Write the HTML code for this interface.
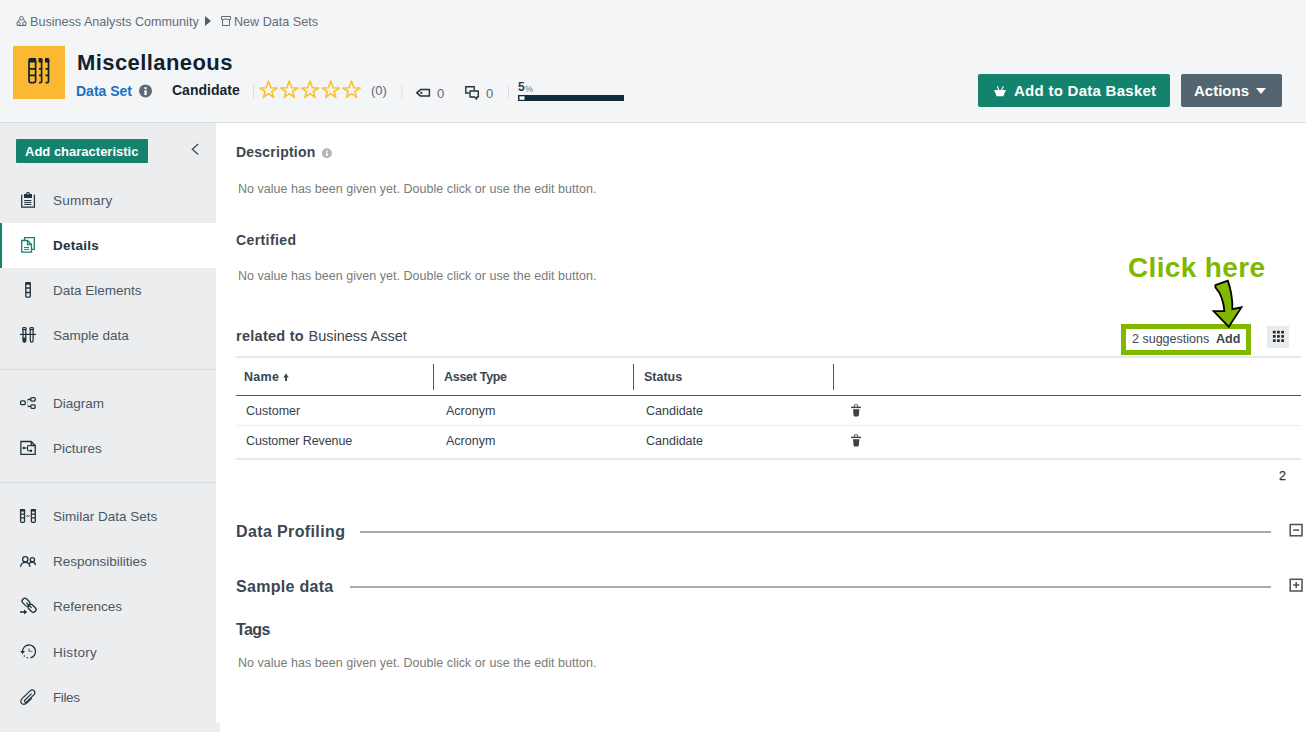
<!DOCTYPE html>
<html><head><meta charset="utf-8">
<style>
*{box-sizing:border-box;margin:0;padding:0}
html,body{width:1306px;height:732px;overflow:hidden;background:#fff;font-family:"Liberation Sans",sans-serif;}
.a{position:absolute;white-space:nowrap}
#hdr{position:absolute;left:0;top:0;width:1306px;height:123px;background:#f4f5f7;border-bottom:1px solid #d8dde0}
#side{position:absolute;left:0;top:123px;width:216px;height:609px;background:#ebedef}
.nav{position:absolute;left:53px;font-size:13.5px;color:#4a5864}
.ico{position:absolute;left:20px}
.nv{font-size:12.5px;letter-spacing:0.03px;color:#7a7a7a}
.h{font-weight:bold;color:#3c4650}
</style></head><body>
<div id="hdr"></div>
<div id="side"></div>
<div class="a" style="left:216px;top:723px;width:4px;height:9px;background:#ebedef"></div>

<!-- breadcrumb -->
<div class="a" style="left:30px;top:15px;font-size:12.6px;color:#5f6e78">Business Analysts Community</div>
<div class="a" style="left:234px;top:15px;font-size:12.6px;color:#5f6e78">New Data Sets</div>

<!-- yellow icon -->
<div class="a" style="left:13px;top:46px;width:52px;height:53px;background:#fbb832"></div>
<div class="a" style="left:77px;top:50px;font-size:22px;letter-spacing:0.42px;font-weight:bold;color:#10222e">Miscellaneous</div>
<div class="a" style="left:76px;top:83px;font-size:14px;font-weight:bold;color:#1a70c4">Data Set</div>
<div class="a" style="left:172px;top:82px;font-size:14px;font-weight:bold;color:#17252f">Candidate</div>

<div class="a" style="left:978px;top:74px;width:192px;height:33px;background:#13836e;border-radius:2px"></div>
<div class="a" style="left:1014px;top:82px;font-size:15px;letter-spacing:0.27px;font-weight:bold;color:#fff">Add to Data Basket</div>
<div class="a" style="left:1181px;top:74px;width:101px;height:33px;background:#536570;border-radius:2px"></div>
<div class="a" style="left:1194px;top:82px;font-size:15px;font-weight:bold;color:#fff">Actions</div>

<div class="a" style="left:371px;top:83px;font-size:13px;color:#5a6a75">(0)</div>
<div class="a" style="left:437px;top:86px;font-size:13px;color:#5a6a75">0</div>
<div class="a" style="left:486px;top:86px;font-size:13px;color:#5a6a75">0</div>
<div class="a" style="left:518px;top:80px;font-size:12px;font-weight:bold;color:#2c3e4a">5</div>
<div class="a" style="left:525px;top:84px;font-size:9px;color:#6a7a85">%</div>
<!-- sidebar -->
<div class="a" style="left:16px;top:139px;width:132px;height:24px;background:#13836e;border-radius:1px"></div>
<div class="a" style="left:25px;top:144px;font-size:13px;font-weight:bold;color:#fff">Add characteristic</div>
<div class="a" style="left:0;top:223px;width:216px;height:45px;background:#fff;border-left:2px solid #13836e"></div>
<div class="nav a" style="top:193px;letter-spacing:0.25px">Summary</div>
<div class="nav a" style="top:238px;font-weight:bold;letter-spacing:0.25px;color:#22333f">Details</div>
<div class="nav a" style="top:283px">Data Elements</div>
<div class="nav a" style="top:328px">Sample data</div>
<div class="a" style="left:0;top:369px;width:216px;height:1px;background:#d9dcdf"></div>
<div class="nav a" style="top:396px">Diagram</div>
<div class="nav a" style="top:441px">Pictures</div>
<div class="a" style="left:0;top:482px;width:216px;height:1px;background:#d9dcdf"></div>
<div class="nav a" style="top:509px">Similar Data Sets</div>
<div class="nav a" style="top:554px">Responsibilities</div>
<div class="nav a" style="top:599px">References</div>
<div class="nav a" style="top:645px;letter-spacing:0.3px">History</div>
<div class="nav a" style="top:690px;letter-spacing:-0.4px">Files</div>

<!-- main -->
<div class="a h" style="left:236px;top:144px;font-size:14px;letter-spacing:0.22px">Description</div>
<div class="a nv" style="left:238px;top:182px">No value has been given yet. Double click or use the edit button.</div>
<div class="a h" style="left:236px;top:232px;font-size:14px;letter-spacing:0.4px">Certified</div>
<div class="a nv" style="left:238px;top:269px">No value has been given yet. Double click or use the edit button.</div>
<div class="a" style="left:236px;top:328px;font-size:14.5px;letter-spacing:0.27px;font-weight:bold;color:#3c4650">related to</div>
<div class="a" style="left:308.5px;top:328px;font-size:14.5px;color:#3c4650">Business Asset</div>

<div class="a" style="left:1128px;top:252px;font-size:28px;letter-spacing:0.35px;font-weight:bold;color:#80b800">Click here</div>
<div class="a" style="left:1121px;top:324px;width:130px;height:31px;border:5px solid #80b800;background:#fff"></div>
<div class="a" style="left:1132px;top:332px;font-size:12.5px;color:#3c4650">2 suggestions</div>
<div class="a" style="left:1216px;top:332px;font-size:12.5px;font-weight:bold;color:#3c4650">Add</div>
<div class="a" style="left:1267px;top:326px;width:22px;height:22px;background:#e8ebee"></div>

<div class="a" style="left:236px;top:356px;width:1065px;height:2px;background:#e5e9ec"></div>
<div class="a h" style="left:244px;top:370px;font-size:12.5px;letter-spacing:0.3px">Name</div>
<div class="a h" style="left:444px;top:370px;font-size:12.5px;letter-spacing:-0.3px">Asset Type</div>
<div class="a h" style="left:644px;top:370px;font-size:12.5px">Status</div>
<div class="a" style="left:433px;top:364px;width:1px;height:26px;background:#555"></div>
<div class="a" style="left:633px;top:364px;width:1px;height:26px;background:#555"></div>
<div class="a" style="left:833px;top:364px;width:1px;height:26px;background:#555"></div>
<div class="a" style="left:236px;top:395px;width:1065px;height:1px;background:#555"></div>
<div class="a" style="left:246px;top:404px;font-size:12.5px;color:#33404a">Customer</div>
<div class="a" style="left:446px;top:404px;font-size:12.5px;color:#33404a">Acronym</div>
<div class="a" style="left:646px;top:404px;font-size:12.5px;color:#33404a">Candidate</div>
<div class="a" style="left:236px;top:425px;width:1065px;height:1px;background:#eceef0"></div>
<div class="a" style="left:246px;top:434px;font-size:12.5px;letter-spacing:-0.1px;color:#33404a">Customer Revenue</div>
<div class="a" style="left:446px;top:434px;font-size:12.5px;color:#33404a">Acronym</div>
<div class="a" style="left:646px;top:434px;font-size:12.5px;color:#33404a">Candidate</div>
<div class="a" style="left:236px;top:458px;width:1065px;height:2px;background:#e5e9ec"></div>
<div class="a" style="left:1279px;top:469px;font-size:12.5px;color:#2a3540;-webkit-text-stroke:0.25px #2a3540">2</div>

<div class="a h" style="left:236px;top:523px;font-size:16px;letter-spacing:0.38px">Data Profiling</div>
<div class="a" style="left:360px;top:531px;width:911px;height:2px;background:#aaa"></div>
<div class="a h" style="left:236px;top:578px;font-size:16px;letter-spacing:0.3px">Sample data</div>
<div class="a" style="left:350px;top:586px;width:921px;height:2px;background:#aaa"></div>
<div class="a h" style="left:236px;top:621px;font-size:16px;letter-spacing:-0.6px">Tags</div>
<div class="a nv" style="left:238px;top:656px">No value has been given yet. Double click or use the edit button.</div>
<svg class="a" style="left:0;top:0" width="1306" height="732" viewBox="0 0 1306 732">
<!-- breadcrumb icons -->
<g fill="none" stroke="#5f6e78" stroke-width="1">
<circle cx="21.5" cy="18.3" r="1.8"/><circle cx="18.5" cy="23.6" r="1.7"/><circle cx="24.4" cy="23.6" r="1.7"/>
<path d="M19.6,18.9 L17,23.2 M23.4,18.9 L26,23.2 M17,25.5 H26"/>
<path d="M221.5,19.5 V16.5 H230.5 V19.5 H228 Q226,18.2 224,19.5 Z"/><path d="M222.5,19.5 V25.5 H229.5 V19.5"/>
</g>
<path d="M205,16 L211,21 L205,26 Z" fill="#4f5f6a"/>
<!-- big icon glyph -->
<g fill="none" stroke="#13222c" stroke-width="1.7">
<rect x="29" y="58.8" width="6.6" height="23.8" rx="1.5"/>
<path d="M29,68.9 H35.6 M29,75.4 H35.6"/>
<path d="M39,58.8 H40.5 Q41.6,58.8 41.6,60 V81.4 Q41.6,82.6 40.5,82.6 H39 M39,68.9 H41.6 M39,75.4 H41.6"/>
<path d="M45.5,58.8 H47.3 Q48.5,58.8 48.5,60 V81.4 Q48.5,82.6 47.3,82.6 H45.5 M45.5,68.9 H48.5 M45.5,75.4 H48.5"/>
</g>
<rect x="29" y="58" width="6.6" height="4.4" rx="1" fill="#13222c"/>
<path d="M38.6,58 H41 Q42.4,58 42.4,59.5 V62.4 H38.6 Z M45,58 H47.5 Q49.3,58 49.3,59.5 V62.4 H45 Z" fill="#13222c"/>
<!-- info -->
<circle cx="145.5" cy="90.9" r="6.5" fill="#5a6b76"/>
<rect x="144.4" y="87.2" width="2.3" height="1.9" fill="#fff"/><rect x="144.4" y="90.2" width="2.3" height="4.9" fill="#fff"/>
<!-- separators -->
<rect x="253" y="85" width="1" height="13" fill="#d8dbdf"/>
<rect x="401.5" y="85.7" width="1" height="12.5" fill="#d8dbdf"/>
<rect x="508" y="85.7" width="1" height="12.5" fill="#d8dbdf"/>
<!-- stars -->
<g fill="none" stroke="#fcc02c" stroke-width="1.6" stroke-linejoin="round">
<path id="st" d="M268.5,81.1 L270.9,87.7 L277.2,88.1 L271.8,91.5 L273.6,97.4 L268.5,93.6 L263.4,97.4 L265.2,91.5 L259.8,88.1 L266.1,87.7 Z"/>
<use href="#st" x="20.75"/><use href="#st" x="41.5"/><use href="#st" x="62.25"/><use href="#st" x="83"/>
</g>
<!-- tag -->
<path d="M416.8,92.9 L420.6,89.6 H429.4 V96.1 H420.6 Z" fill="none" stroke="#1f323d" stroke-width="1.5" stroke-linejoin="round"/>
<circle cx="421.3" cy="92.9" r="1.1" fill="#1f323d"/>
<!-- comments -->
<path d="M469.3,93 H465.8 V86.8 H474.2 V90.5" fill="none" stroke="#1f323d" stroke-width="1.4"/>
<path d="M470,91 H478.3 V97 H477 L476.5,99 L474.5,97 H470 Z" fill="none" stroke="#1f323d" stroke-width="1.4" stroke-linejoin="round"/>
<!-- progress -->
<rect x="518" y="95" width="106" height="6" fill="#132d3c"/>
<rect x="519.5" y="96.3" width="5" height="3.5" fill="#fff"/>
<!-- basket -->
<path d="M994,90 H1006 L1003.3,96.2 H996.7 Z" fill="#fff"/>
<path d="M997.3,86.3 L998.8,90 M1003.4,86.3 L1001.5,90" stroke="#fff" stroke-width="1.1"/>
<!-- dropdown -->
<path d="M1256,88 L1266,88 L1261,94 Z" fill="#fff"/>
<!-- chevron -->
<path d="M198.2,144 L192.3,149.2 L198.2,154.4" fill="none" stroke="#3c4a55" stroke-width="1.3"/>
</svg>
<svg class="a" style="left:0;top:0" width="1306" height="732" viewBox="0 0 1306 732">
<g fill="none" stroke="#1f323d" stroke-width="1.25">
<!-- summary clipboard -->
<path d="M22.5,195.3 H21.7 V207.2 H34.4 V195.3 H33.6"/>
<path d="M24.2,200.5 H31.4 M24.2,202.4 H31.4 M24.2,204.4 H31.4" stroke-width="1"/>
</g>
<path d="M24,194 H26 Q26.5,191.8 28,191.8 Q29.5,191.8 30,194 H32 V197.9 H24 Z" fill="#1f323d"/>
<rect x="27.3" y="193.2" width="1.4" height="1.2" fill="#eee"/>
<!-- details (green) -->
<g fill="none" stroke="#13836e" stroke-width="1.3">
<path d="M24.5,240 V237.7 H34.3 V249.3 H32"/>
<path d="M21.7,240.5 H27.5 L31.5,244.5 V252.2 H21.7 Z"/>
<path d="M27.5,240.5 V244.5 H31.5"/>
<path d="M24,247.4 H29.1 M24,249.4 H29.1" stroke-width="1"/>
</g>
<!-- data elements -->
<g fill="none" stroke="#1f323d" stroke-width="1.3">
<rect x="25.8" y="282.8" width="4.5" height="14.4" rx="1"/>
<path d="M25.8,288 H30.3 M25.8,292.5 H30.3"/>
</g>
<rect x="25.2" y="282.1" width="5.7" height="2.6" rx="1" fill="#1f323d"/>
<!-- sample data tubes -->
<g fill="none" stroke="#1f323d" stroke-width="1.25">
<rect x="22.6" y="327.7" width="3.6" height="2" rx="0.9"/>
<rect x="29.9" y="327.7" width="3.6" height="2" rx="0.9"/>
<path d="M23,329.7 V340.5 Q23,342.2 24.4,342.2 Q25.8,342.2 25.8,340.5 V329.7"/>
<path d="M30.3,329.7 V340.5 Q30.3,342.2 31.7,342.2 Q33.1,342.2 33.1,340.5 V329.7"/>
<path d="M19.9,334.4 H36"/>
</g>
<path d="M23,337.4 H25.8 V340.5 Q25.8,342.2 24.4,342.2 Q23,342.2 23,340.5 Z" fill="#1f323d"/>
<!-- diagram -->
<g fill="none" stroke="#1f323d" stroke-width="1.3">
<rect x="20.6" y="400.9" width="4.6" height="3.8" rx="1"/>
<rect x="30.8" y="397.6" width="4.4" height="3.5" rx="1"/>
<rect x="30.8" y="404.8" width="4.4" height="3.5" rx="1"/>
<path d="M27.6,399.5 H30.8 M27.6,406.4 H30.8"/>
<path d="M27.6,399.5 V406.4" stroke-width="0.6" stroke="#8a949b"/>
</g>
<!-- pictures -->
<g fill="none" stroke="#1f323d" stroke-width="1.3">
<path d="M20.9,441.5 H31.2 L35.2,445.5 V454.3 H20.9 Z"/>
<path d="M31.2,441.5 V445.5 H35.2"/>
<path d="M24,448 H27.6 M27.6,445.6 V450.8 H30.5 M27.6,445.6 H31.2" stroke-width="1"/>
</g>
<circle cx="23.8" cy="448" r="1.2" fill="#1f323d"/><circle cx="31" cy="450.8" r="1.2" fill="#1f323d"/>
<!-- similar -->
<g fill="none" stroke="#1f323d" stroke-width="1.3">
<rect x="20.6" y="509.8" width="3.9" height="12.5" rx="1"/>
<rect x="31.4" y="509.8" width="3.9" height="12.5" rx="1"/>
<path d="M20.6,514.2 H24.5 M20.6,517.9 H24.5 M31.4,514.2 H35.3 M31.4,517.9 H35.3"/>
<path d="M26.2,516.5 Q27,515.3 27.9,516 Q28.8,516.7 29.6,515.5" stroke-width="1"/>
</g>
<rect x="19.9" y="509.1" width="5.3" height="2.5" rx="1" fill="#1f323d"/>
<rect x="30.75" y="509.1" width="5.3" height="2.5" rx="1" fill="#1f323d"/>
<!-- responsibilities -->
<g fill="none" stroke="#1f323d" stroke-width="1.3" stroke-linecap="round">
<circle cx="25.3" cy="559.3" r="2.7"/>
<circle cx="32.4" cy="559.7" r="2.1"/>
<path d="M20.6,566.3 Q21.5,562.3 25.3,562.3 Q29.2,562.3 29.9,566.3"/>
<path d="M29,563.5 Q30.3,562 32.4,562 Q34.6,562 35.4,564.6"/>
</g>
<!-- references -->
<g fill="none" stroke="#1f323d" stroke-width="1.3">
<rect x="21.7" y="599.5" width="8.6" height="5.4" rx="2.5" transform="rotate(45 26 602.2)"/>
<rect x="27.8" y="605.7" width="8.6" height="5.4" rx="2.5" transform="rotate(45 32.1 608.4)"/>
<path d="M26.4,602.6 L29,605.2 M29.4,605.6 L31.6,607.9"/>
</g>
<path d="M20.1,612 H24.5" stroke="#1f323d" stroke-width="1.6"/>
<path d="M24,609.5 L27.2,612 L24,614.5 Z" fill="#1f323d"/>
<!-- history -->
<g fill="none" stroke="#1f323d" stroke-width="1.3">
<path d="M22.5,651.5 A6.5,6.5 0 1 1 30.5,657.8"/>
<path d="M29,648.2 V651.3 H32.4" stroke="#5a6870" stroke-width="1.1"/>
</g>
<path d="M20.2,651 H25 L22.6,654 Z" fill="#1f323d"/>
<circle cx="24.3" cy="656" r="0.8" fill="#1f323d"/><circle cx="27.3" cy="657.8" r="0.8" fill="#1f323d"/>
<!-- files paperclip -->
<path d="M31.6,693.6 L24.8,700.2 Q23.9,701.3 24.9,702.1 Q25.8,702.8 26.7,701.8 L33.6,695.2 Q35.9,692.7 34.2,690.8 Q32.2,689 29.9,691.1 L22.3,698.4 Q19.5,701.7 21.7,703.6 Q24.2,705.3 27,702.8 L31.7,698.3" fill="none" stroke="#1f323d" stroke-width="1.2"/>
<!-- description info -->
<circle cx="326.9" cy="153.2" r="5" fill="#b5b5b5"/>
<rect x="326.1" y="150.4" width="1.6" height="1.4" fill="#fff"/><rect x="326.1" y="152.5" width="1.6" height="3.6" fill="#fff"/>
<!-- sort arrow -->
<rect x="285.1" y="376" width="1.9" height="5" fill="#3c4650"/>
<path d="M283.3,377.4 L286.05,373.5 L288.8,377.4 Z" fill="#3c4650"/>
<!-- trash -->
<g id="tr" fill="#3c4348">
<rect x="851" y="406.7" width="10" height="1.4"/>
<path d="M854.3,407 V405.2 Q854.3,404.8 854.8,404.8 H857.2 Q857.7,404.8 857.7,405.2 V407" fill="none" stroke="#3c4348" stroke-width="0.9"/>
<path d="M853,409.3 H859.4 L858.8,415.6 Q858.7,416.4 857.9,416.4 H854.5 Q853.7,416.4 853.6,415.6 Z"/>
</g>
<use href="#tr" y="30"/>
<!-- grid -->
<g fill="#2a2f33">
<rect x="1272.9" y="330.8" width="2.8" height="2.8" rx="0.5"/><rect x="1277" y="330.8" width="2.8" height="2.8" rx="0.5"/><rect x="1281.2" y="330.8" width="2.8" height="2.8" rx="0.5"/>
<rect x="1272.9" y="335" width="2.8" height="2.8" rx="0.5"/><rect x="1277" y="335" width="2.8" height="2.8" rx="0.5"/><rect x="1281.2" y="335" width="2.8" height="2.8" rx="0.5"/>
<rect x="1272.9" y="339.2" width="2.8" height="2.8" rx="0.5"/><rect x="1277" y="339.2" width="2.8" height="2.8" rx="0.5"/><rect x="1281.2" y="339.2" width="2.8" height="2.8" rx="0.5"/>
</g>
<!-- minus / plus -->
<g fill="none" stroke="#4a5058" stroke-width="1.5">
<rect x="1290.2" y="524.5" width="11.8" height="11.3"/>
<path d="M1293.2,530.1 H1299.2"/>
<rect x="1290.2" y="579.3" width="11.8" height="11.7"/>
<path d="M1293.2,585.1 H1299.2 M1296.2,582.1 V588.1"/>
</g>
<!-- click arrow -->
<path d="M1215.4,285.2 L1227.8,280.6 Q1232.6,294 1232.4,309.1 L1241.4,307.4 L1228.8,326.8 L1213.6,311.2 L1224.4,311.2 Q1223.2,296 1215.4,287.4 Z" fill="#80b800" stroke="#000" stroke-width="1.8" stroke-linejoin="miter"/>
</svg>
</body></html>
